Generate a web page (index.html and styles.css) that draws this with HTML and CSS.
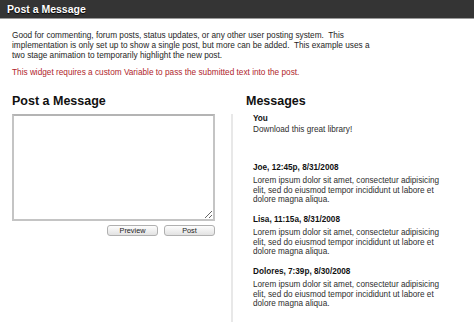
FILE: index.html
```html
<!DOCTYPE html>
<html>
<head>
<meta charset="utf-8">
<link rel="stylesheet" href="styles.css">
</head>
<body>
<div class="titlebar">Post a Message</div>
<div class="intro">
  <p>Good for commenting, forum posts, status updates, or any other user posting system.&nbsp; This implementation is only set up to show a single post, but more can be added.&nbsp; This example uses a two stage animation to temporarily highlight the new post.</p>
  <p class="warn">This widget requires a custom Variable to pass the submitted text into the post.</p>
</div>
<div class="columns">
  <div class="left">
    <h2>Post a Message</h2>
    <textarea class="box"></textarea>
    <div class="buttons">
      <button class="btn">Preview</button>
      <button class="btn">Post</button>
    </div>
  </div>
  <div class="right">
    <h2>Messages</h2>
    <div class="list">
      <div class="msg you">
        <div class="who">You</div>
        <div class="text">Download this great library!</div>
      </div>
      <div class="msg">
        <div class="who">Joe, 12:45p, 8/31/2008</div>
        <div class="text">Lorem ipsum dolor sit amet, consectetur adipisicing elit, sed do eiusmod tempor incididunt ut labore et dolore magna aliqua.</div>
      </div>
      <div class="msg">
        <div class="who">Lisa, 11:15a, 8/31/2008</div>
        <div class="text">Lorem ipsum dolor sit amet, consectetur adipisicing elit, sed do eiusmod tempor incididunt ut labore et dolore magna aliqua.</div>
      </div>
      <div class="msg">
        <div class="who">Dolores, 7:39p, 8/30/2008</div>
        <div class="text">Lorem ipsum dolor sit amet, consectetur adipisicing elit, sed do eiusmod tempor incididunt ut labore et dolore magna aliqua.</div>
      </div>
    </div>
  </div>
</div>
</body>
</html>
```
FILE: styles.css
```css
html, body {
  margin: 0;
  padding: 0;
  background: #fff;
  height: 100%;
  overflow: hidden;
}
body {
  font-family: "Liberation Sans", Arial, sans-serif;
  color: #1e1e1e;
  display: flex;
  flex-direction: column;
}
.titlebar {
  height: 18px;
  line-height: 18px;
  background: #343434;
  border-bottom: 1px solid #9a9a9a;
  color: #fff;
  font-weight: bold;
  font-size: 10.5px;
  padding-left: 7px;
  text-shadow: 0 1px 1px #000;
}
.intro {
  padding: 12px 12px 0 12px;
  font-size: 8.25px;
  line-height: 9.8px;
  width: 364px;
}
.intro p {
  margin: 0 0 8px 0;
}
.intro .warn {
  color: #b0262c;
  margin-bottom: 0;
}
.columns {
  flex: 1;
  display: flex;
  margin-top: 16px;
}
h2 {
  margin: 0 0 5px 0;
  font-size: 12.5px;
  line-height: 15px;
  font-weight: bold;
  color: #111;
}
.left {
  width: 203px;
  padding-left: 12px;
}
.box {
  display: block;
  box-sizing: border-box;
  width: 203px;
  height: 107px;
  margin: 0;
  border: 2px solid #c4c4c4;
  border-top-color: #b4b4b4;
  background: #fff;
  resize: both;
}
.buttons {
  display: flex;
  justify-content: flex-end;
  gap: 6px;
  margin-top: 4px;
}
.btn {
  width: 51px;
  height: 11px;
  padding: 0;
  border: 1px solid #b0b0b0;
  border-radius: 3px;
  background: linear-gradient(#fdfdfd, #e2e2e2);
  font-family: "Liberation Sans", Arial, sans-serif;
  font-size: 7.3px;
  line-height: 9px;
  color: #222;
}
.right {
  margin-left: 16px;
  display: flex;
  flex-direction: column;
  flex: 1;
}
.right h2 {
  margin-left: 15px;
}
.list {
  flex: 1;
  border-left: 2px solid #e8e8e8;
  padding-left: 20px;
  font-size: 8.2px;
  line-height: 9.3px;
  width: 198px;
}
.msg {
  margin-bottom: 11px;
}
.msg.you {
  margin-bottom: 29px;
}
.who {
  font-weight: bold;
  color: #111;
  line-height: 9px;
  margin-bottom: 4px;
}
.you .who {
  margin-bottom: 2px;
}
.text {
  color: #2e2e2e;
}
```
